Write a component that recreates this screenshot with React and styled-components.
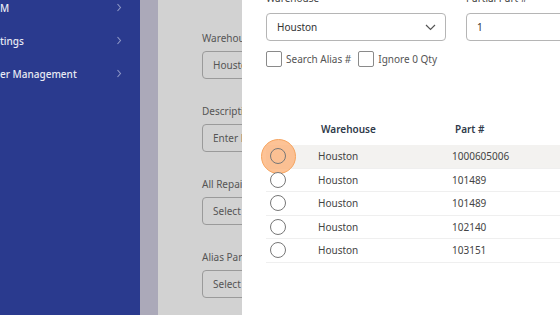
import React from "react";
import styled, { createGlobalStyle } from "styled-components";

const GlobalStyle = createGlobalStyle`
  html, body {
    margin: 0;
    padding: 0;
    width: 560px;
    height: 315px;
    overflow: hidden;
    font-family: "Noto Sans", "Open Sans", sans-serif;
  }
  * { box-sizing: border-box; }
`;

const Page = styled.div`
  position: relative;
  display: flex;
  width: 560px;
  height: 315px;
  overflow: hidden;
`;

const Sidebar = styled.div`
  width: 140px;
  flex-shrink: 0;
  background: #2a3a8e;
  display: flex;
  flex-direction: column;
`;

const NavItem = styled.div`
  height: 33px;
  display: flex;
  align-items: center;
  justify-content: space-between;
  padding-right: 18px;
  margin-top: ${(p) => (p.first ? "-9px" : "0")};
  color: #e8eaf4;
  font-size: 10px;
  font-weight: 500;
  white-space: nowrap;
`;

const Chevron = styled.svg`
  width: 6px;
  height: 9px;
`;

const Gutter = styled.div`
  width: 18px;
  flex-shrink: 0;
  background: #aba9b9;
`;

const Main = styled.div`
  flex: 1;
  background: #d2d2d2;
  padding: 32px 0 0 44px;
`;

const BgField = styled.div`
  margin-bottom: 26px;
`;

const BgLabel = styled.div`
  font-size: 10px;
  color: #555;
  height: 13px;
  line-height: 13px;
  margin-bottom: 6px;
  white-space: nowrap;
`;

const BgInput = styled.div`
  width: 120px;
  height: 28px;
  border: 1px solid #9a9a9a;
  border-radius: 4px;
  padding-left: 10px;
  display: flex;
  align-items: center;
  font-size: 10px;
  color: #555;
  white-space: nowrap;
`;

const Modal = styled.div`
  position: absolute;
  top: 0;
  left: 242px;
  right: 0;
  bottom: 0;
  background: #fff;
  overflow: hidden;
  padding: 0 0 0 24px;
`;

const Content = styled.div`
  margin-top: -9px;
  width: 340px;
`;

const FieldRow = styled.div`
  display: grid;
  grid-template-columns: 180px 120px;
  column-gap: 20px;
`;

const Label = styled.div`
  font-size: 10px;
  color: #444;
  height: 14px;
  line-height: 14px;
  margin-bottom: 8px;
`;

const Box = styled.div`
  height: 28px;
  border: 1px solid #b5b5b5;
  border-radius: 4px;
  padding: 0 9px 0 10px;
  display: flex;
  align-items: center;
  justify-content: space-between;
  font-size: 10px;
  color: #333;
`;

const CheckRow = styled.div`
  display: flex;
  align-items: center;
  margin-top: 10px;
  gap: 4px;
`;

const Check = styled.span`
  width: 16px;
  height: 16px;
  border: 1px solid #8a8a8a;
  border-radius: 2px;
  background: #fff;
`;

const CheckText = styled.span`
  font-size: 10px;
  color: #555;
  margin-right: 3px;
`;

const Table = styled.div`
  margin-top: 49px;
  width: 320px;
`;

const Row = styled.div`
  display: grid;
  grid-template-columns: 44px 134px 1fr;
  height: ${(p) => (p.head ? "29px" : "23.5px")};
  padding-bottom: ${(p) => (p.head ? "3px" : "0")};
  align-items: center;
  background: ${(p) => (p.active ? "#f3f2f0" : "transparent")};
  border-bottom: ${(p) => (p.head ? "none" : "1px solid #efefef")};
`;

const Cell = styled.div`
  font-size: 10px;
  color: ${(p) => (p.head ? "#2f3a4a" : "#444")};
  font-weight: ${(p) => (p.head ? 600 : 400)};
  padding-left: ${(p) => (p.head ? "11px" : "8px")};
  white-space: nowrap;
`;

const RadioCell = styled.div`
  position: relative;
  padding-left: 4px;
  display: flex;
  align-items: center;
`;

const Ripple = styled.span`
  position: absolute;
  left: -5px;
  top: 50%;
  width: 35px;
  height: 35px;
  margin-top: -17.5px;
  border-radius: 50%;
  background: rgba(252, 178, 120, 0.78);
  border: 1.5px solid #f6a45f;
`;

const Radio = styled.span`
  position: relative;
  width: 16px;
  height: 16px;
  border-radius: 50%;
  border: 1px solid #777;
  background: ${(p) => (p.active ? "transparent" : "#fff")};
`;

const rows = ["1000605006", "101489", "101489", "102140", "103151"];

const ChevronRight = () => (
  <Chevron viewBox="0 0 6 9">
    <path d="M1.5 1 L4.5 4.5 L1.5 8" fill="none" stroke="#8f98c6" strokeWidth="1.1" />
  </Chevron>
);

export default function App() {
  return (
    <Page>
      <GlobalStyle />
      <Sidebar>
        <NavItem first>
          <span>M</span>
          <ChevronRight />
        </NavItem>
        <NavItem>
          <span>tings</span>
          <ChevronRight />
        </NavItem>
        <NavItem>
          <span>er Management</span>
          <ChevronRight />
        </NavItem>
      </Sidebar>
      <Gutter />
      <Main>
        {[
          ["Warehouse", "Houston"],
          ["Description", "Enter Description"],
          ["All Repair", "Select"],
          ["Alias Part", "Select"],
        ].map(([l, v]) => (
          <BgField key={l}>
            <BgLabel>{l}</BgLabel>
            <BgInput>{v}</BgInput>
          </BgField>
        ))}
      </Main>
      <Modal>
        <Content>
          <FieldRow>
            <div>
              <Label>Warehouse</Label>
              <Box>
                <span>Houston</span>
                <svg width="11" height="7" viewBox="0 0 11 7">
                  <path d="M1 1 L5.5 5.5 L10 1" fill="none" stroke="#555" strokeWidth="1.2" />
                </svg>
              </Box>
            </div>
            <div>
              <Label>Partial Part #</Label>
              <Box>1</Box>
            </div>
          </FieldRow>
          <CheckRow>
            <Check />
            <CheckText>Search Alias #</CheckText>
            <Check />
            <CheckText>Ignore 0 Qty</CheckText>
          </CheckRow>
          <Table>
            <Row head>
              <div />
              <Cell head>Warehouse</Cell>
              <Cell head>Part #</Cell>
            </Row>
            {rows.map((p, i) => (
              <Row key={i} active={i === 0}>
                <RadioCell>
                  {i === 0 && <Ripple />}
                  <Radio active={i === 0} />
                </RadioCell>
                <Cell>Houston</Cell>
                <Cell>{p}</Cell>
              </Row>
            ))}
          </Table>
        </Content>
      </Modal>
    </Page>
  );
}
